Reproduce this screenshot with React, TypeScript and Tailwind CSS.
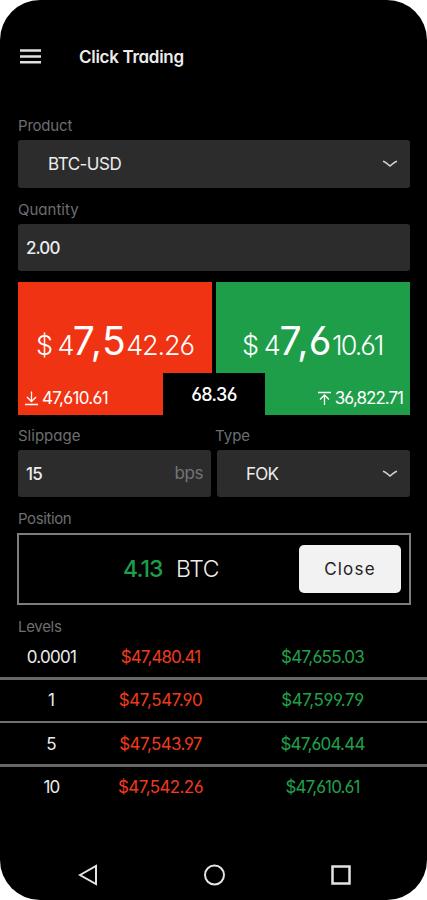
import type { ReactNode } from "react";

const levels = [
  { size: "0.0001", bid: "$47,480.41", ask: "$47,655.03", row: "h-10 pt-px", sizeTracking: "tracking-[-0.7px]", bidTracking: "tracking-[-0.9px]", askTracking: "tracking-[-0.7px]" },
  { size: "1", bid: "$47,547.90", ask: "$47,599.79", row: "h-11 border-t-[3px] border-[#666868]", sizeTracking: "", bidTracking: "tracking-[-0.4px]", askTracking: "tracking-[-0.4px]" },
  { size: "5", bid: "$47,543.97", ask: "$47,604.44", row: "h-[43px] border-t-2 border-[#707272] pt-0.5", sizeTracking: "", bidTracking: "tracking-[-0.6px]", askTracking: "tracking-[-0.8px]" },
  { size: "10", bid: "$47,542.26", ask: "$47,610.61", row: "h-11 border-t-[3px] border-[#666868] pt-px", sizeTracking: "tracking-[-0.9px]", bidTracking: "tracking-[-0.6px]", askTracking: "tracking-[-0.9px]" },
];

function Label({ children, className = "" }: { children: ReactNode; className?: string }) {
  return <div className={`flex items-end text-[15px] leading-[22px] text-[#6c6e70] ${className}`}>{children}</div>;
}

function Chevron() {
  return (
    <svg width="16" height="8" viewBox="0 0 16 8" fill="none" stroke="#d0d0d0" strokeWidth="1.5">
      <path d="M1 1.2C3.5 2 5.5 3.8 8 6C10.5 3.8 12.5 2 15 1.2" />
    </svg>
  );
}

function Menu() {
  return (
    <svg width="21" height="16" viewBox="0 0 21 16" stroke="#e0e0e0" strokeWidth="2.5">
      <path d="M0 1.5H21M0 7.5H21M0 13.300H21" />
    </svg>
  );
}

export default function App() {
  return (
    <div className="h-[900px] w-[427px] bg-white font-['Inter','Liberation_Sans',sans-serif] [font-feature-settings:'cv11','cv03','cv04']">
      <main className="flex h-[900px] flex-col overflow-hidden rounded-[40px] bg-black text-[#ececec]">
        <header className="flex h-[114px] shrink-0 items-center gap-[38px] pl-5">
          <Menu />
          <h1 className="pt-0.5 text-[17px] font-semibold tracking-[-0.3px]">Click Trading</h1>
        </header>

        <section className="flex flex-col pr-[17px] pl-[18px]">
          <Label className="h-[23px] tracking-[-0.2px]">Product</Label>
          <div className="mt-[3px] flex h-12 items-center justify-between rounded-[3px] bg-[#2c2c2c] pr-3 pl-[30px] text-[17px] tracking-[-0.5px]">
            <span className="pt-0.5">BTC-USD</span>
            <Chevron />
          </div>
          <Label className="h-[33px]">Quantity</Label>
          <div className="mt-[3px] flex h-[47px] items-center rounded-[3px] bg-[#2c2c2c] pt-0.5 pl-2 text-[17px] font-medium tracking-[-0.9px]">2.00</div>

          <div className="relative mt-[11px] flex h-[133px] gap-1">
            <div className="flex w-[194px] flex-col justify-between bg-[#f03313] text-white">
              <div className="mt-[35px] flex items-baseline pl-[18px] text-[27px] leading-[48px]">
                <span className="font-light tracking-[-1.6px]">$ 4</span>
                <span className="text-[39px] tracking-[0.6px]">7,5</span>
                <span className="font-light tracking-[-1.1px]">42.26</span>
              </div>
              <div className="mb-[5px] flex items-center gap-1 pl-[7px] text-[17px] leading-6 tracking-[-0.7px]">
                <svg width="13" height="15" viewBox="0 0 13 15" fill="none" stroke="white" strokeWidth="1.3">
                  <path d="M6.5 0.5V10M2 6L6.5 10.5L11 6M0 13.5H13" />
                </svg>
                <span>47,610.61</span>
              </div>
            </div>
            <div className="flex w-[194px] flex-col justify-between bg-[#1e9e48] text-white">
              <div className="mt-[35px] flex items-baseline pl-[26px] text-[27px] leading-[48px]">
                <span className="font-light tracking-[-1.4px]">$ 4</span>
                <span className="text-[39px] tracking-[0.5px]">7,6</span>
                <span className="font-light tracking-[-2px]">10.61</span>
              </div>
              <div className="mb-[5px] flex items-center justify-end gap-1 pr-[7px] text-[17px] leading-6 tracking-[-1px]">
                <svg width="13" height="15" viewBox="0 0 13 15" fill="none" stroke="white" strokeWidth="1.3">
                  <path d="M0 1.5H13M6.5 14V4M2 8.5L6.5 4L11 8.5" />
                </svg>
                <span>36,822.71</span>
              </div>
            </div>
            <div className="absolute bottom-0 left-[145px] flex h-[42px] w-[102px] items-center justify-center bg-black text-[18px] font-medium tracking-[-0.6px] text-white">68.36</div>
          </div>

          <div className="flex">
            <Label className="h-8 w-[197px]">Slippage</Label>
            <Label className="h-8">Type</Label>
          </div>
          <div className="mt-[3px] flex h-[47px] gap-[6px] text-[17px]">
            <div className="flex w-[193px] items-center justify-between rounded-[3px] bg-[#2c2c2c] pr-2 pl-2">
              <span className="pt-0.5 font-medium tracking-[-0.7px]">15</span>
              <span className="tracking-[-0.4px] text-[#747474]">bps</span>
            </div>
            <div className="flex w-[193px] items-center justify-between rounded-[3px] bg-[#2c2c2c] pr-3 pl-[29px]">
              <span className="pt-0.5 tracking-[-0.8px]">FOK</span>
              <Chevron />
            </div>
          </div>

          <Label className="h-[33px] tracking-[-0.4px]">Position</Label>
          <div className="mt-[3px] -ml-px flex h-[72px] w-[394px] items-center border-2 border-[#7c7c7c] pl-[104px] text-[23px]">
            <span className="w-[53px] font-medium tracking-[-0.9px] text-[#1e9e48]">4.13</span>
            <span className="w-[123px] font-light tracking-[-0.4px]">BTC</span>
            <button className="h-12 w-[102px] rounded-[5px] bg-[#f2f2f2] pt-0.5 text-[17px] tracking-[1.2px] text-[#222]">Close</button>
          </div>
          <Label className="h-[33px] tracking-[-0.3px]">Levels</Label>
        </section>

        <section className="-mt-px flex flex-col text-[17px]">
          {levels.map((level) => (
            <div key={level.size} className={`flex items-center text-center ${level.row}`}>
              <span className={`ml-[11px] w-[81px] ${level.sizeTracking}`}>{level.size}</span>
              <span className={`ml-[18px] w-[101px] text-[#ef3b1c] ${level.bidTracking}`}>{level.bid}</span>
              <span className={`ml-[61px] w-[101px] text-[#20a04c] ${level.askTracking}`}>{level.ask}</span>
            </div>
          ))}
        </section>

        <nav className="mt-auto mb-[13px] flex h-6 items-center pl-[78px]">
          <svg width="21" height="24" viewBox="0 0 21 24" fill="none" stroke="#e4e4e4" strokeWidth="2"><path d="M2 12L18 3V21Z" /></svg>
          <svg className="ml-[104px]" width="24" height="24" viewBox="0 0 24 24" fill="none" stroke="#e4e4e4" strokeWidth="2"><circle cx="11.5" cy="12" r="9.5" /></svg>
          <svg className="ml-[102px]" width="24" height="24" viewBox="0 0 24 24" fill="none" stroke="#e4e4e4" strokeWidth="2.5"><rect x="3.5" y="3.5" width="17" height="17" /></svg>
        </nav>
      </main>
    </div>
  );
}
